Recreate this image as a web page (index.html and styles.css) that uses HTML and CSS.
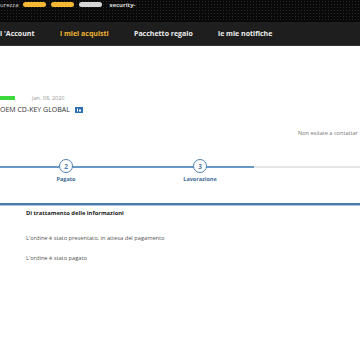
FILE: index.html
```html
<!DOCTYPE html>
<html lang="it">

<head>
  <meta charset="UTF-8" />
  <meta name="viewport" content="width=device-width, initial-scale=1.0" />
  <title>I miei acquisti</title>
  <link rel="stylesheet" href="styles.css">
</head>

<body>
  <div class="topbar">
    <span class="sec-label">urezza</span>
    <span class="pill on"></span>
    <span class="pill on"></span>
    <span class="pill"></span>
    <span class="sec-name">security-</span>
  </div>

  <nav class="menu">
    <a class="menu-item w1">l 'Account</a>
    <a class="menu-item w2 active">i miei acquisti</a>
    <a class="menu-item w3">Pacchetto regalo</a>
    <a class="menu-item">le mie notifiche</a>
  </nav>

  <div class="order">
    <div class="order-meta">
      <span class="status-bar"></span>
      <span class="date">Jan. 08, 2020</span>
    </div>
    <div class="order-title">
      OEM CD-KEY GLOBAL
      <span class="badge">
        <svg width="8" height="6" viewBox="0 0 8 6">
          <rect x="2" y="1.5" width="1" height="3" fill="#fff" />
          <rect x="4" y="2.5" width="2" height="2" fill="#fff" />
        </svg>
      </span>
    </div>
    <div class="contact">Non esitate a contattar</div>
  </div>

  <div class="steps">
    <div class="track"></div>
    <div class="step s2">
      <div class="circle">2</div>
      <div class="step-label">Pagato</div>
    </div>
    <div class="step s3">
      <div class="circle">3</div>
      <div class="step-label">Lavorazione</div>
    </div>
  </div>

  <div class="divider"></div>

  <div class="info">
    <h4>Di trattamento delle informazioni</h4>
    <p>L'ordine è stato presentato, in attesa del pagamento</p>
    <p>L'ordine è stato pagato</p>
  </div>
</body>

</html>
```

FILE: styles.css
```css
body {
  margin: 0;
  font-family: "Open Sans", Lato, Arial, sans-serif;
  background: #fff;
  overflow: hidden;
  white-space: nowrap;
}

/* top dark strip */
.topbar {
  height: 22px;
  background-color: #090909;
  background-image: radial-gradient(circle, #2a2a2a 0.7px, transparent 0.9px);
  background-size: 3px 3px;
  display: flex;
  align-items: flex-start;
  padding-top: 2px;
  box-sizing: border-box;
  font-size: 6px;
  color: #ddd;
}

.sec-label {
  line-height: 6px;
  margin-right: 5px;
}

.pill {
  width: 23px;
  height: 5px;
  border-radius: 3px;
  background: #d6d6d6;
  margin-right: 5px;
}

.pill.on {
  background: #f6b733;
}

.sec-name {
  line-height: 6px;
  margin-left: 2px;
  font-weight: bold;
}

/* navigation */
.menu {
  height: 23px;
  background: #1e1e1e;
  display: flex;
  align-items: center;
  border-bottom: 1px solid #333;
}

.menu-item {
  color: #eee;
  font-size: 7px;
  font-weight: bold;
}

.menu-item.active {
  color: #f3b431;
}

.w1 {
  width: 60px;
}

.w2 {
  width: 74px;
}

.w3 {
  width: 84px;
}

/* order block */
.order {
  padding-top: 48px;
}

.order-meta {
  display: flex;
  align-items: center;
  height: 8px;
}

.status-bar {
  width: 15px;
  height: 4px;
  background: #3bd93b;
  margin-right: 17px;
}

.date {
  font-size: 5.5px;
  color: #999;
}

.order-title {
  margin-top: 3px;
  font-size: 7px;
  color: #333;
  display: flex;
  align-items: center;
}

.badge {
  display: inline-flex;
  width: 8px;
  height: 6px;
  background: #2f6db3;
  margin-left: 5px;
}

.contact {
  margin-top: 15px;
  padding-left: 298px;
  font-size: 5.6px;
  color: #777;
}

/* progress steps */
.steps {
  position: relative;
  height: 54px;
  margin-top: 12px;
}

.track {
  position: absolute;
  top: 17px;
  left: 0;
  right: 0;
  height: 2px;
  background: linear-gradient(to right, #6a98c4 254px, #e6e6e6 254px);
}

.step {
  position: absolute;
  top: 10px;
  width: 60px;
  margin-left: -30px;
  display: flex;
  flex-direction: column;
  align-items: center;
}

.s2 {
  left: 66px;
}

.s3 {
  left: 200px;
}

.circle {
  width: 12px;
  height: 12px;
  border: 1.5px solid #4f82b3;
  border-radius: 50%;
  background: #fff;
  color: #4f7aa5;
  font-size: 6.5px;
  font-weight: bold;
  display: flex;
  align-items: center;
  justify-content: center;
}

.step-label {
  margin-top: 2px;
  font-size: 5.5px;
  font-weight: bold;
  color: #3f6c98;
}

/* info */
.divider {
  border-top: 2px solid #4a7cab;
  border-bottom: 1px solid #a9c5de;
}

.info {
  padding: 3px 0 0 26px;
}

.info h4 {
  margin: 0 0 17px;
  font-size: 5.8px;
  color: #222;
}

.info p {
  margin: 0 0 12px;
  font-size: 5.7px;
  color: #555;
}
```
